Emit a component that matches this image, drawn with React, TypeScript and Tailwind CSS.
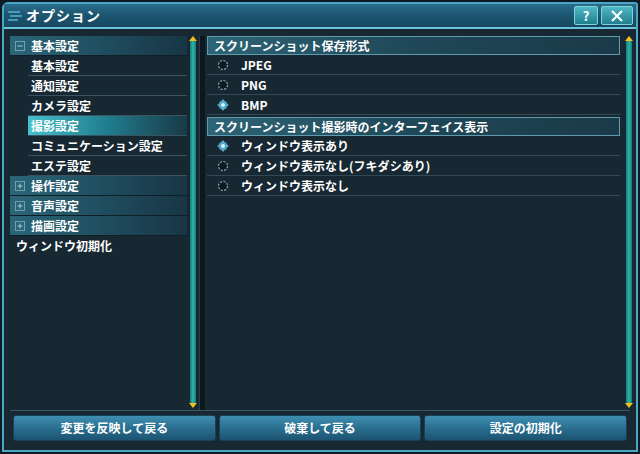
import React from "react";

const font = { fontFamily: '"Noto Sans CJK JP", "Noto Sans", sans-serif' };

type Item = { label: string; kind: "group" | "sub" | "plain"; open?: boolean; selected?: boolean };

const menu: Item[] = [
  { label: "基本設定", kind: "group", open: true },
  { label: "基本設定", kind: "sub" },
  { label: "通知設定", kind: "sub" },
  { label: "カメラ設定", kind: "sub" },
  { label: "撮影設定", kind: "sub", selected: true },
  { label: "コミュニケーション設定", kind: "sub" },
  { label: "エステ設定", kind: "sub" },
  { label: "操作設定", kind: "group" },
  { label: "音声設定", kind: "group" },
  { label: "描画設定", kind: "group" },
  { label: "ウィンドウ初期化", kind: "plain" },
];

const sections = [
  {
    title: "スクリーンショット保存形式",
    options: [
      { label: "JPEG", on: false },
      { label: "PNG", on: false },
      { label: "BMP", on: true },
    ],
  },
  {
    title: "スクリーンショット撮影時のインターフェイス表示",
    options: [
      { label: "ウィンドウ表示あり", on: true },
      { label: "ウィンドウ表示なし(フキダシあり)", on: false },
      { label: "ウィンドウ表示なし", on: false },
    ],
  },
];

function Toggle({ open }: { open?: boolean }) {
  return (
    <span className="w-[10px] h-[10px] border border-[#7fb2c0] flex items-center justify-center mr-[6px] ml-[1px] opacity-80">
      <svg width="8" height="8" viewBox="0 0 8 8">
        <path d="M1.5 4h5" stroke="#cfe6ec" strokeWidth="1" />
        {!open && <path d="M4 1.5v5" stroke="#cfe6ec" strokeWidth="1" />}
      </svg>
    </span>
  );
}

function Radio({ on }: { on: boolean }) {
  return (
    <svg width="12" height="12" viewBox="0 0 12 12" className="mr-[12px]">
      {on ? (
        <>
          <circle cx="6" cy="6" r="4.5" fill="#4aa5c8" />
          <circle cx="6" cy="6" r="2" fill="#d8f2ff" />
          <path d="M6 0.5v2M6 9.5v2M0.5 6h2M9.5 6h2" stroke="#8fd0ea" strokeWidth="1.2" />
        </>
      ) : (
        <circle cx="6" cy="6" r="4.5" fill="#0e1a21" stroke="#8aa3ad" strokeWidth="1.2" strokeDasharray="2.2 1.3" />
      )}
    </svg>
  );
}

function ScrollBar() {
  return (
    <div className="w-[7px] flex flex-col items-center">
      <svg width="8" height="5" viewBox="0 0 8 5">
        <path d="M0 5L4 0L8 5Z" fill="#f0c020" />
      </svg>
      <div className="flex-1 w-[6px] bg-gradient-to-r from-[#137a78] via-[#2fb5ab] to-[#137a78] rounded-[1px]" />
      <svg width="8" height="5" viewBox="0 0 8 5">
        <path d="M0 0L4 5L8 0Z" fill="#f0c020" />
      </svg>
    </div>
  );
}

export default function App() {
  return (
    <div
      style={font}
      className="w-[640px] h-[454px] bg-[#0d1a22] p-[2px] overflow-hidden"
    >
      <div className="w-full h-full border-2 border-[#4aa6c4] rounded-tl-[6px] rounded-tr-[3px] bg-[#172832] flex flex-col">
        {/* title bar */}
        <div className="h-[25px] flex items-center bg-gradient-to-b from-[#2a6d8a] via-[#1c5570] to-[#164860] border-b-2 border-[#6cc3dc] pl-[3px] pr-[3px]">
          <svg width="16" height="12" viewBox="0 0 16 12" className="mr-[3px]">
            <path d="M1 2h12M3 6h12M1 10h10" stroke="#5ab0cf" strokeWidth="1.5" />
          </svg>
          <span className="text-white text-[14px] font-bold tracking-[1px]">オプション</span>
          <div className="ml-auto flex gap-[3px]">
            <div className="w-[24px] h-[19px] rounded-[2px] bg-gradient-to-b from-[#4fb8c4] to-[#1f7f8e] border border-[#7fd3dc] flex items-center justify-center text-white text-[13px] font-bold leading-none">
              ?
            </div>
            <div className="w-[32px] h-[19px] rounded-[2px] bg-gradient-to-b from-[#4fb8c4] to-[#1f7f8e] border border-[#7fd3dc] flex items-center justify-center">
              <svg width="14" height="12" viewBox="0 0 14 12">
                <path d="M2 1L12 11M12 1L2 11" stroke="#ffffff" strokeWidth="2" />
              </svg>
            </div>
          </div>
        </div>

        {/* body */}
        <div className="flex-1 flex pt-[7px] pl-[6px] pr-[4px]">
          {/* left list */}
          <div className="w-[177px] flex flex-col">
            {menu.map((m, i) => (
              <div key={i} className="h-[20px] flex items-stretch">
                {m.kind === "group" && (
                  <div className="flex-1 flex items-center pl-[4px] bg-gradient-to-r from-[#2b6678] via-[#204f60] to-[#183645] border-b border-[#0f1e27]">
                    <Toggle open={m.open} />
                    <span className="text-white text-[12px] font-bold">{m.label}</span>
                  </div>
                )}
                {m.kind === "sub" && (
                  <div className="flex-1 ml-[18px] flex flex-col">
                    <div
                      className={
                        "flex-1 flex items-center pl-[3px] " +
                        (m.selected
                          ? "bg-gradient-to-r from-[#48c0cc] via-[#1f7d8e] to-[#183a48]"
                          : "")
                      }
                    >
                      <span className="text-white text-[12px] font-bold">{m.label}</span>
                    </div>
                    <div className="h-[1px] bg-[#3a5360]" />
                  </div>
                )}
                {m.kind === "plain" && (
                  <div className="flex-1 flex items-center pl-[6px]">
                    <span className="text-white text-[12px] font-bold">{m.label}</span>
                  </div>
                )}
              </div>
            ))}
          </div>

          <div className="ml-[2px] pb-[2px] flex">
            <ScrollBar />
          </div>

          {/* divider */}
          <div className="w-[6px] ml-[3px] mr-[2px] bg-[#0c171e] border-l border-[#26404d]" />

          {/* right panel */}
          <div className="flex-1 flex flex-col pr-[3px] gap-[2px]">
            {sections.map((s, si) => (
              <div key={si} className="flex flex-col">
                <div className="h-[19px] flex items-center pl-[6px] border border-[#5f9aae] bg-gradient-to-r from-[#2d6476] via-[#1f4858] to-[#1a3a48]">
                  <span className="text-white text-[12px] font-bold">{s.title}</span>
                </div>
                {s.options.map((o, oi) => (
                  <div key={oi} className="h-[20px] flex items-center pl-[10px] border-b border-[#324a56]">
                    <Radio on={o.on} />
                    <span className="text-white text-[12px] font-bold">{o.label}</span>
                  </div>
                ))}
              </div>
            ))}
          </div>

          <div className="ml-[2px] pb-[2px] flex">
            <ScrollBar />
          </div>
        </div>

        {/* footer */}
        <div className="h-[40px] mx-[6px] border-t border-[#3b5664] flex gap-[3px] pt-[4px] px-[3px]">
          {["変更を反映して戻る", "破棄して戻る", "設定の初期化"].map((b) => (
            <div
              key={b}
              className="flex-1 h-[26px] rounded-[3px] border border-[#174156] bg-gradient-to-b from-[#3f8fb2] via-[#2a6f90] to-[#1c5472] flex items-center justify-center"
            >
              <span className="text-white text-[12px] font-bold">{b}</span>
            </div>
          ))}
        </div>
      </div>
    </div>
  );
}
